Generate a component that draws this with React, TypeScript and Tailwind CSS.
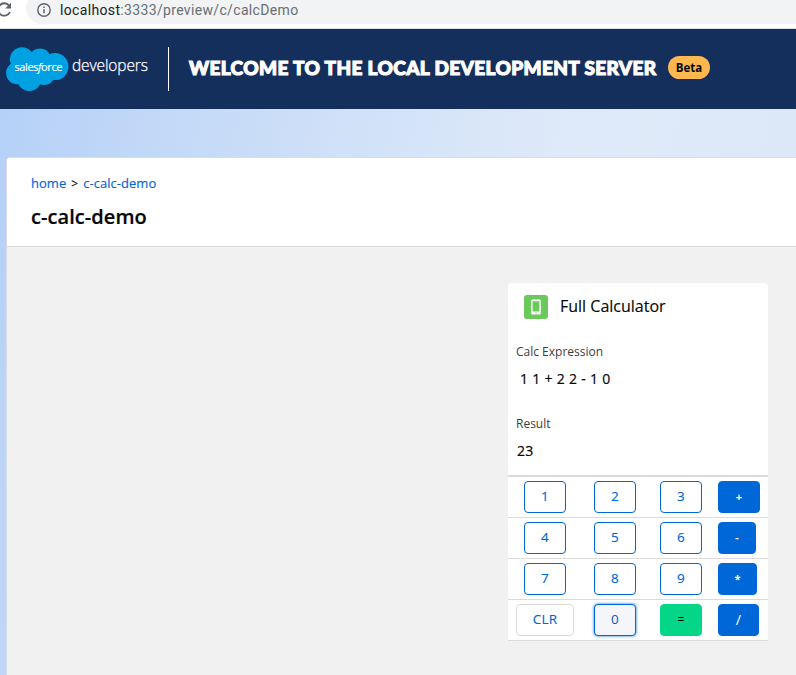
import React from "react";

const base =
  "flex h-8 items-center justify-center rounded-[4px] border leading-[28px] tracking-[0.2px]";
const outline =
  "w-[42px] border-[#0067d8] bg-white pb-[2px] text-[13.5px] text-[#0067d8] [-webkit-text-stroke:0.15px_#0067d8]";
const brand = "border-[#0067d8] bg-[#0067d8] text-white";

type Key = { label: string; style: string };

const rows: Key[][] = [
  [
    { label: "1", style: outline },
    { label: "2", style: outline },
    { label: "3", style: outline },
    { label: "+", style: `${brand} w-[42px] text-[11px] font-bold` },
  ],
  [
    { label: "4", style: outline },
    { label: "5", style: outline },
    { label: "6", style: outline },
    { label: "-", style: `${brand} w-[38px] text-[12px] font-semibold` },
  ],
  [
    { label: "7", style: outline },
    { label: "8", style: outline },
    { label: "9", style: outline },
    { label: "*", style: `${brand} w-[39px] text-[11px] font-bold` },
  ],
  [
    {
      label: "CLR",
      style:
        "w-[58px] border-[#dddbda] bg-white pb-[2px] text-[13.5px] text-[#0067d8] [-webkit-text-stroke:0.15px_#0067d8]",
    },
    {
      label: "0",
      style:
        "w-[42px] border-[#0067d8] bg-[#f4f6fb] pb-[2px] text-[13.5px] text-[#0059bc] shadow-[0_0_3px_#0070d2]",
    },
    { label: "=", style: "w-[42px] border-[#04d687] bg-[#04d687] text-[12px] text-[#080707]" },
    { label: "/", style: `${brand} w-[41px] pb-px text-[14.5px] font-medium` },
  ],
];

function AddressBar() {
  return (
    <div className="flex h-[29px] items-start overflow-hidden border-b border-[#dcdee1] bg-white">
      <svg className="-ml-1 h-[20px] w-4 shrink-0" viewBox="0 0 16 20" fill="none">
        <path d="M13.2 5.6A6.2 6.2 0 1 0 14 12" stroke="#5f6368" strokeWidth="1.8" />
        <path d="M15 2.8v5.8H9.2z" fill="#5f6368" />
      </svg>
      <div className="-mt-2 ml-[14px] flex h-8 flex-1 items-center rounded-l-full bg-[#f1f3f4] pt-[4px] pl-[11px]">
        <svg className="h-[14px] w-[14px]" viewBox="0 0 14 14" fill="none">
          <circle cx="7" cy="7" r="6.2" stroke="#5f6368" strokeWidth="1.4" />
          <path d="M7 6.2v4M7 3.5v1.5" stroke="#5f6368" strokeWidth="1.5" />
        </svg>
        <span className="ml-[9px] font-[Roboto,sans-serif] text-[14px] leading-5 tracking-[0.34px] whitespace-nowrap text-[#6a6e73]">
          <span className="text-[#202124]">localhost</span>:3333/preview/c/calcDemo
        </span>
      </div>
    </div>
  );
}

function Logo() {
  return (
    <svg className="ml-[6px] h-11 w-[144px]" viewBox="0 0 144 44">
      <g fill="#00a1e3">
        <circle cx="16" cy="12.3" r="12" />
        <circle cx="34" cy="12.5" r="11" />
        <circle cx="49" cy="19.6" r="13.5" />
        <circle cx="11.3" cy="26" r="11.2" />
        <circle cx="23.3" cy="32" r="12" />
        <circle cx="38" cy="27" r="11" />
        <path d="M12 10h38v20H12z" />
      </g>
      <text x="8.5" y="23.8" textLength="48" fill="#fff" stroke="#fff" strokeWidth="0.15" fontSize="11" fontFamily="Open Sans, sans-serif">
        sales<tspan fontStyle="italic">f</tspan>orce
      </text>
      <text x="66" y="23.5" textLength="76" fill="#fff" stroke="#fff" strokeWidth="0.25" fontSize="15.5" fontWeight="300" fontFamily="Open Sans, sans-serif">
        developers
      </text>
    </svg>
  );
}

export default function App() {
  return (
    <div className="h-[675px] overflow-hidden bg-white font-['Open_Sans',sans-serif] text-[#080707]">
      <AddressBar />
      <header className="flex h-20 items-center bg-[#152f5d]">
        <Logo />
        <div className="ml-[18px] h-11 w-px bg-white" />
        <h1 className="ml-5 w-[468px] pb-[2px] font-[Lato,sans-serif] text-[19px] leading-6 font-black tracking-[0.37px] whitespace-nowrap text-white [-webkit-text-stroke:1.1px_white]">
          WELCOME TO THE LOCAL DEVELOPMENT SERVER
        </h1>
        <span className="mb-[3px] ml-[11px] flex h-[23px] w-[42px] items-center justify-center rounded-full bg-[#ffb750] text-[11.5px] font-bold text-[#080707]">
          Beta
        </span>
      </header>
      <main className="h-[566px] bg-[linear-gradient(100deg,#b6d1f7_0%,#d2e2f8_42%,#dfeaf9_65%,#dbe8f8_100%)] pt-12 pl-[6px]">
        <section className="h-[518px] rounded-tl-[4px] border-t border-l border-[#d8dce4] bg-[#f1f1f1]">
          <div className="h-[89px] rounded-tl-[3px] border-b border-[#dddbda] bg-white pt-4 pl-6">
            <nav className="flex h-5 items-center gap-[5px] text-[13px] tracking-[0.04px] whitespace-nowrap [-webkit-text-stroke:0.15px]">
              <a className="text-[#0067d8]">home</a>
              <span className="text-[12px]">&gt;</span>
              <a className="text-[#0067d8]">c-calc-demo</a>
            </nav>
            <h2 className="mt-[10px] text-[20px] leading-[25px] font-semibold tracking-[0.07px] [-webkit-text-stroke:0.2px_#080707]">
              c-calc-demo
            </h2>
          </div>
          <article className="mt-9 ml-[501px] w-[260px] rounded-t-[4px] bg-white">
            <div className="flex h-12 items-center pl-4">
              <div className="flex h-6 w-6 items-center justify-center rounded-[3px] bg-[#6bc95b]">
                <svg className="h-4 w-[10px]" viewBox="0 0 10 16">
                  <path
                    fill="#fff"
                    fillRule="evenodd"
                    d="M1.5.5h7a1.3 1.3 0 0 1 1.3 1.3v12.400a1.300 1.300 0 0 1-1.300 1.300h-7A1.300 1.300 0 0 1 .2 14.200V1.800A1.300 1.300 0 0 1 1.500.5zM1.600 2.200v10.400h6.800V2.200zM4.300 13.500v.9h1.400v-.9z"
                  />
                </svg>
              </div>
              <span className="ml-3 pb-[2px] text-[16px] leading-6 [-webkit-text-stroke:0.15px_#080707]">
                Full Calculator
              </span>
            </div>
            <div className="h-[72px] px-2 pt-3">
              <div className="text-[12px] leading-[18px] text-[#3e3e3c]">Calc Expression</div>
              <div className="mt-2 pl-1 text-[14px] leading-5 tracking-[0.3px] whitespace-nowrap [-webkit-text-stroke:0.2px_#080707]">
                1 1 + 2 2 - 1 0
              </div>
            </div>
            <div className="h-[72px] px-2 pt-3">
              <div className="text-[12px] leading-[18px] text-[#3e3e3c]">Result</div>
              <div className="mt-2 pl-px text-[14px] leading-5 tracking-[0.3px] [-webkit-text-stroke:0.2px_#080707]">
                23
              </div>
            </div>
            <div className="border-t border-[#dddbda]">
              {rows.map((row) => (
                <div
                  key={row[0].label}
                  className="grid h-[41px] grid-cols-[74px_66px_66px_54px] items-center justify-items-center border-t border-[#dddbda]"
                >
                  {row.map((key, i) => (
                    <div key={key.label} className={i === 3 ? "justify-self-start pl-1" : ""}>
                      <button className={`${base} ${key.style}`}>{key.label}</button>
                    </div>
                  ))}
                </div>
              ))}
              <div className="h-px bg-[#dddbda]" />
            </div>
          </article>
        </section>
      </main>
    </div>
  );
}
